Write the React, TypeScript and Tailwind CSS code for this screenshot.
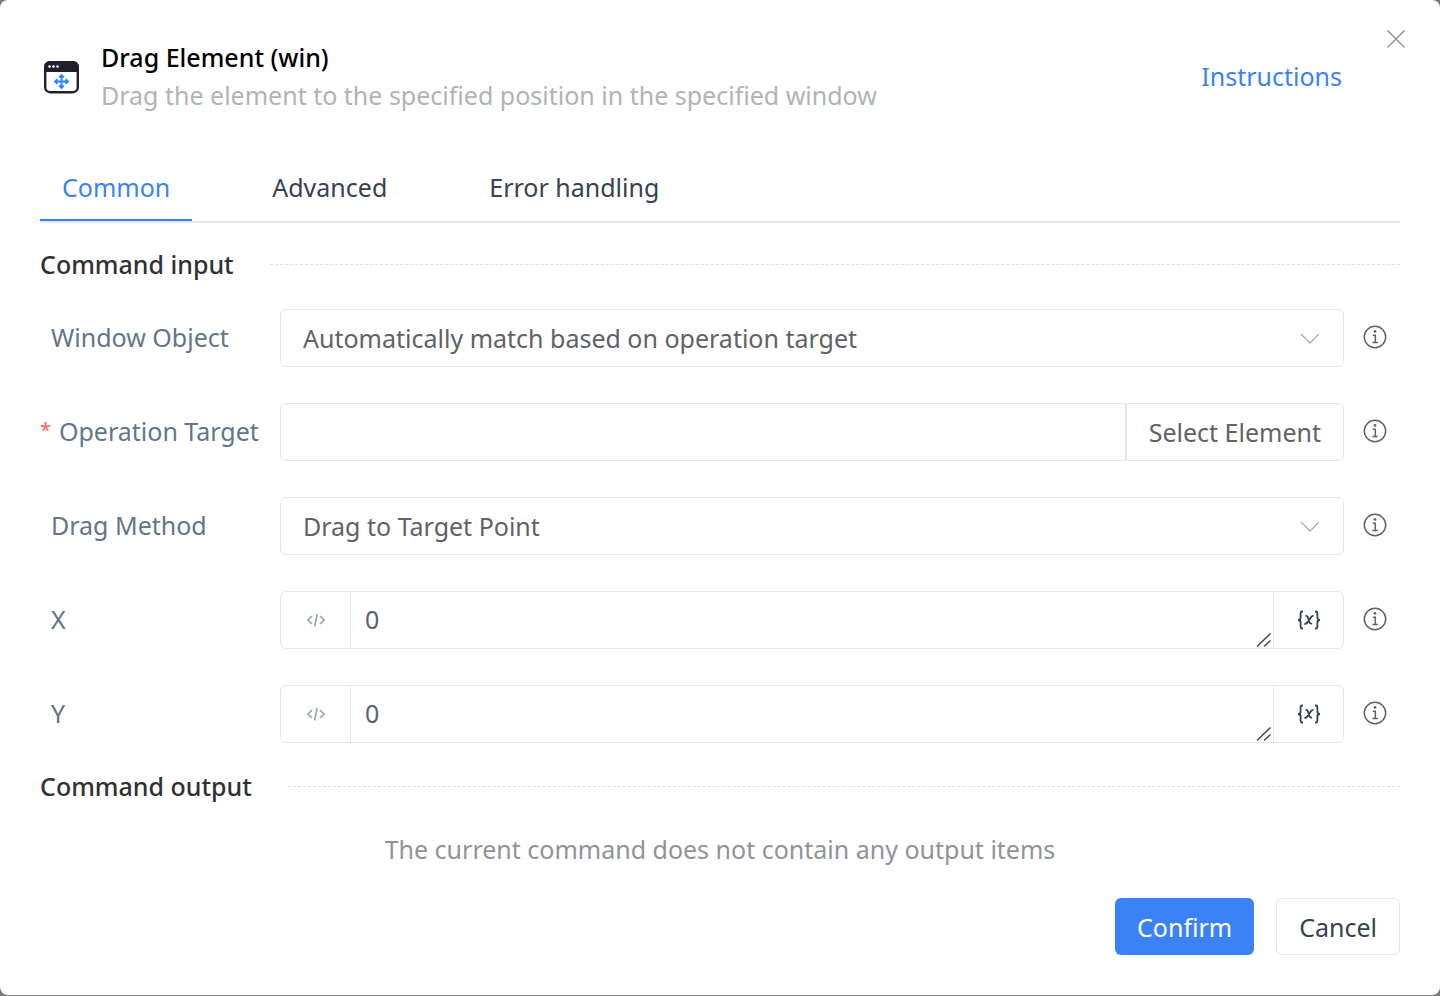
import { useState } from 'react'
import type { ReactNode } from 'react'

const tabs = ['Common', 'Advanced', 'Error handling']

const WindowIcon = () => (
  <svg className="h-9 w-9 shrink-0" viewBox="0 0 36 36" fill="none">
    <rect x="2.2" y="4.2" width="32.6" height="30" rx="5" stroke="#221f30" strokeWidth="2.4" />
    <path d="M1 14V9a6 6 0 0 1 6-6h23a6 6 0 0 1 6 6v5z" fill="#221f30" />
    <circle cx="6.5" cy="8.5" r="1.3" fill="#fff" />
    <circle cx="10.5" cy="8.5" r="1.3" fill="#fff" />
    <circle cx="14.5" cy="8.5" r="1.3" fill="#fff" />
    <path
      d="M18.5 18v11M13 23.5h11M16.2 19.4l2.3-2.3 2.3 2.3M16.2 27.6l2.3 2.3 2.3-2.3M14.4 21.2l-2.3 2.3 2.3 2.3M22.6 21.2l2.3 2.3-2.3 2.3"
      stroke="#2b85ff"
      strokeWidth="2"
    />
  </svg>
)

const ChevronIcon = () => (
  <svg
    className="pointer-events-none absolute top-1/2 right-6 h-3 w-5 -translate-y-1/2"
    viewBox="0 0 20 12"
    fill="none"
    stroke="#a8abb2"
    strokeWidth="1.3"
    strokeLinecap="round"
  >
    <path d="M1.5 2.5l8.5 8.5 8.5-8.5" />
  </svg>
)

const InfoIcon = () => (
  <svg className="h-6 w-6" viewBox="0 0 24 24" fill="none" stroke="#606266" strokeWidth="1.5">
    <circle cx="12" cy="12" r="10.7" />
    <path d="M9.8 10.2h2.5v7M9.4 17.4h5.4" />
    <circle cx="12" cy="6.4" r="1.4" fill="#606266" stroke="none" />
  </svg>
)

const CodeIcon = () => (
  <svg className="h-4 w-5" viewBox="0 0 20 16" fill="none" stroke="#9ca3af" strokeWidth="1.7">
    <path d="M6 4L2 8l4 4M14 4l4 4-4 4M11.2 1.8L8.6 14.4" />
  </svg>
)

const VariableIcon = () => (
  <svg className="h-5 w-6" viewBox="0 0 24 20" fill="none" stroke="#374151" strokeWidth="1.8">
    <path d="M6 1.5H5Q3.6 1.5 3.6 3v4.6Q3.6 10 1 10q2.6 0 2.6 2.4V17q0 1.5 1.4 1.5h1" />
    <path d="M18 1.5h1q1.4 0 1.4 1.5v4.6Q20.4 10 23 10q-2.6 0-2.6 2.4V17q0 1.5-1.4 1.5h-1" />
    <path d="M8.4 6.2q1.8-.8 2.4 1l1.8 5.2q.6 1.6 2.4 1M16.6 6q-1.4-.4-2.8 1.4l-3.6 5.2q-1.2 1.6-2.8 1" />
  </svg>
)

const ResizeGrip = () => (
  <svg
    className="pointer-events-none absolute right-px bottom-0 h-4 w-4"
    viewBox="0 0 16 16"
    stroke="#4b4b4b"
    strokeWidth="1.6"
  >
    <path d="M1 14.5L14.5 1.5M8 14.5L14.5 8.5" />
  </svg>
)

const SectionTitle = ({ children }: { children: ReactNode }) => (
  <div className="flex items-center gap-9">
    <h2 className="pb-px font-medium text-[#303133]">{children}</h2>
    <div className="flex-1 border-t border-dashed border-[#dcdfe6]" />
  </div>
)

type RowProps = { id: string; label: string; required?: boolean; children: ReactNode }

const FormRow = ({ id, label, required, children }: RowProps) => (
  <div className="flex items-center">
    <label
      htmlFor={id}
      className={
        required
          ? 'flex w-60 shrink-0 gap-2 pb-0.5 whitespace-nowrap text-[#64748b]'
          : 'w-60 shrink-0 pb-0.5 pl-[11px] whitespace-nowrap text-[#64748b]'
      }
    >
      {required && <span className="text-xl leading-9 font-medium text-[#f56c6c]">*</span>}
      {label}
    </label>
    <div className="min-w-0 flex-1">{children}</div>
    <button type="button" aria-label={`About ${label}`} className="mr-[13px] ml-[19px] shrink-0 pb-0.5">
      <InfoIcon />
    </button>
  </div>
)

const SelectField = ({ id, option }: { id: string; option: string }) => (
  <div className="relative">
    <select
      id={id}
      className="h-[58px] w-full appearance-none rounded-md border border-[#e5e7eb] bg-white px-[22px] text-[#606266] outline-none"
    >
      <option>{option}</option>
    </select>
    <ChevronIcon />
  </div>
)

const NumberField = ({ id }: { id: string }) => {
  const [value, setValue] = useState('0')

  return (
    <div className="flex h-[58px] rounded-md border border-[#e5e7eb]">
      <button
        type="button"
        aria-label="Expression mode"
        className="flex w-[70px] shrink-0 items-center justify-center border-r border-[#e5e7eb]"
      >
        <CodeIcon />
      </button>
      <div className="relative flex-1">
        <textarea
          id={id}
          rows={1}
          value={value}
          onChange={(e) => setValue(e.target.value)}
          className="block h-14 w-full resize-none overflow-hidden px-[14px] py-2 text-[#606266] outline-none"
        />
        <ResizeGrip />
      </div>
      <button
        type="button"
        aria-label="Insert variable"
        className="flex w-[70px] shrink-0 items-center justify-center border-l border-[#e5e7eb]"
      >
        <VariableIcon />
      </button>
    </div>
  )
}

const App = () => {
  const [activeTab, setActiveTab] = useState('Common')
  const [target, setTarget] = useState('')

  return (
    <div className="flex min-h-screen flex-col bg-[#7a7a7a] pb-px font-['Noto_Sans','Open_Sans',sans-serif] text-[25px] leading-[38px]">
      <main className="relative flex-1 rounded-lg bg-white px-10 pt-[38px] pb-10">
        <button type="button" aria-label="Close" className="absolute top-[29px] right-[34px]">
          <svg className="h-5 w-5" viewBox="0 0 20 20" stroke="#909399" strokeWidth="1.5">
            <path d="M1.5 1.5l17 17M18.5 1.5l-17 17" />
          </svg>
        </button>

        <header className="flex items-center pr-[58px] pl-[3px]">
          <WindowIcon />
          <div className="ml-[22px] flex-1">
            <h1 className="font-medium text-black">Drag Element (win)</h1>
            <p className="text-[#b1b3b8]">Drag the element to the specified position in the specified window</p>
          </div>
          <a href="#instructions" className="text-[#3b82f6]">Instructions</a>
        </header>

        <nav className="mt-10 flex gap-[58px] border-b-2 border-[#e4e7ed]">
          {tabs.map((tab) => (
            <button
              key={tab}
              type="button"
              onClick={() => setActiveTab(tab)}
              className={
                tab === activeTab
                  ? 'h-[67px] border-b-2 border-[#3b82f6] px-[22px] text-[#3b82f6]'
                  : 'h-[67px] border-b-2 border-transparent px-[22px] text-[#374151]'
              }
            >
              {tab}
            </button>
          ))}
        </nav>

        <form onSubmit={(e) => e.preventDefault()}>
          <div className="mt-[22px]">
            <SectionTitle>Command input</SectionTitle>
          </div>

          <div className="mt-[25px] flex flex-col gap-9">
            <FormRow id="window-object" label="Window Object">
              <SelectField id="window-object" option="Automatically match based on operation target" />
            </FormRow>
            <FormRow id="operation-target" label="Operation Target" required>
              <div className="flex h-[58px] rounded-md border border-[#e5e7eb]">
                <input
                  id="operation-target"
                  type="text"
                  value={target}
                  onChange={(e) => setTarget(e.target.value)}
                  className="min-w-0 flex-1 px-[22px] text-[#606266] outline-none"
                />
                <button type="button" className="border-l-2 border-[#e5e7eb] px-[22px] text-[#606266]">
                  Select Element
                </button>
              </div>
            </FormRow>
            <FormRow id="drag-method" label="Drag Method">
              <SelectField id="drag-method" option="Drag to Target Point" />
            </FormRow>
            <FormRow id="x" label="X">
              <NumberField id="x" />
            </FormRow>
            <FormRow id="y" label="Y">
              <NumberField id="y" />
            </FormRow>
          </div>

          <div className="mt-6">
            <SectionTitle>Command output</SectionTitle>
          </div>
          <p className="mt-6 text-center text-[#909399]">
            The current command does not contain any output items
          </p>

          <div className="mt-[30px] flex justify-end gap-[22px]">
            <button type="submit" className="h-[57px] rounded-md bg-[#3b82f6] px-[22px] text-white">
              Confirm
            </button>
            <button type="button" className="h-[57px] rounded-md border border-[#e5e7eb] px-[22px] text-[#374151]">
              Cancel
            </button>
          </div>
        </form>
      </main>
    </div>
  )
}

export default App
